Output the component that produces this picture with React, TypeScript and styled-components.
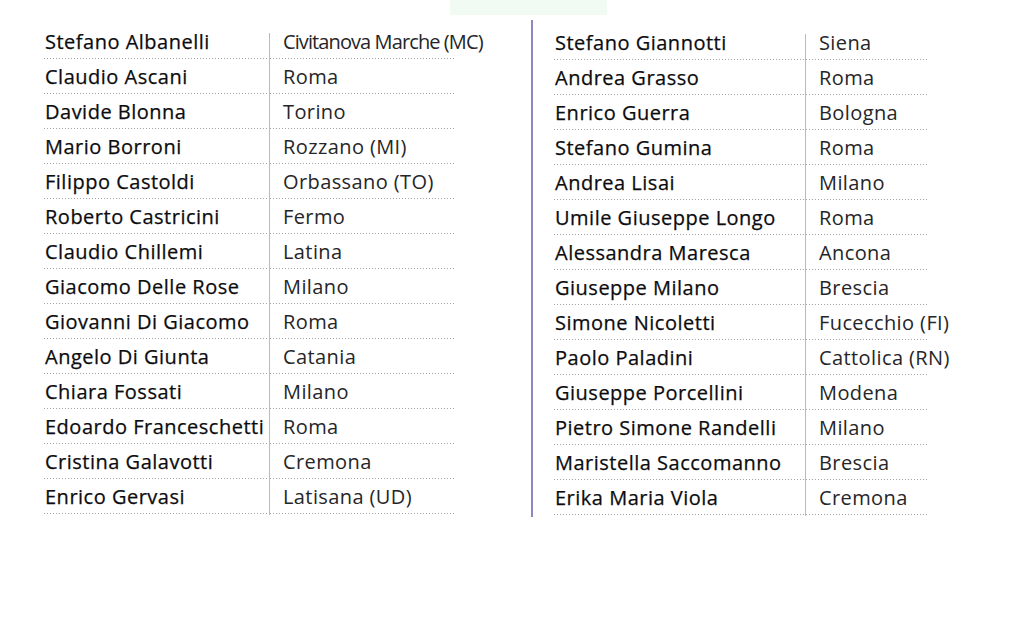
import React from "react";
import styled, { createGlobalStyle } from "styled-components";

const GlobalStyle = createGlobalStyle`
  *, *::before, *::after {
    box-sizing: border-box;
  }

  body {
    margin: 0;
    background: #ffffff;
    font-family: "Open Sans", "Lato", sans-serif;
    color: #1d1d1f;
  }
`;

type Entry = [string, string];

const leftList: Entry[] = [
  ["Stefano Albanelli", "Civitanova Marche (MC)"],
  ["Claudio Ascani", "Roma"],
  ["Davide Blonna", "Torino"],
  ["Mario Borroni", "Rozzano (MI)"],
  ["Filippo Castoldi", "Orbassano (TO)"],
  ["Roberto Castricini", "Fermo"],
  ["Claudio Chillemi", "Latina"],
  ["Giacomo Delle Rose", "Milano"],
  ["Giovanni Di Giacomo", "Roma"],
  ["Angelo Di Giunta", "Catania"],
  ["Chiara Fossati", "Milano"],
  ["Edoardo Franceschetti", "Roma"],
  ["Cristina Galavotti", "Cremona"],
  ["Enrico Gervasi", "Latisana (UD)"],
];

const rightList: Entry[] = [
  ["Stefano Giannotti", "Siena"],
  ["Andrea Grasso", "Roma"],
  ["Enrico Guerra", "Bologna"],
  ["Stefano Gumina", "Roma"],
  ["Andrea Lisai", "Milano"],
  ["Umile Giuseppe Longo", "Roma"],
  ["Alessandra Maresca", "Ancona"],
  ["Giuseppe Milano", "Brescia"],
  ["Simone Nicoletti", "Fucecchio (FI)"],
  ["Paolo Paladini", "Cattolica (RN)"],
  ["Giuseppe Porcellini", "Modena"],
  ["Pietro Simone Randelli", "Milano"],
  ["Maristella Saccomanno", "Brescia"],
  ["Erika Maria Viola", "Cremona"],
];

const Page = styled.div`
  width: 1024px;
  height: 617px;
  overflow: hidden;
`;

const TopTab = styled.div`
  width: 157px;
  height: 15px;
  margin-left: 450px;
  background: #f2faf4;
`;

const Columns = styled.div`
  display: flex;
  align-items: flex-start;
  padding-left: 44px;
`;

const Table = styled.div<{ $nameWidth: number; $cityWidth: number; $top: number }>`
  position: relative;
  display: grid;
  grid-template-columns: ${(p) => p.$nameWidth}px ${(p) => p.$cityWidth}px;
  margin-top: ${(p) => p.$top}px;

  &::before {
    content: "";
    position: absolute;
    left: ${(p) => p.$nameWidth - 1}px;
    top: 9px;
    bottom: -1px;
    width: 1px;
    background: #b9b8cd;
  }
`;

const Row = styled.div`
  display: contents;
`;

const Cell = styled.div`
  height: 35px;
  display: flex;
  align-items: center;
  font-size: 20px;
  white-space: nowrap;
  background-image: linear-gradient(to right, #a3a3a3 1px, transparent 1px);
  background-size: 3px 1px;
  background-repeat: repeat-x;
  background-position: 0 100%;
`;

const Name = styled(Cell)`
  padding-left: 1px;
  font-weight: 500;
  letter-spacing: 0.5px;
  color: #0c0c0e;
  -webkit-text-stroke: 0.25px #0c0c0e;
`;

const City = styled(Cell)<{ $tight?: boolean }>`
  padding-left: 13px;
  font-weight: 400;
  color: #262628;
  letter-spacing: ${(p) => (p.$tight ? "-0.9px" : "0.4px")};
`;

const RightSection = styled.div`
  margin-left: 77px;
  margin-top: 5px;
  padding: 5px 0 2px 21px;
  border-left: 2px solid #8c89bf;
`;

const NameTable = ({
  list,
  nameWidth,
  cityWidth,
  top,
}: {
  list: Entry[];
  nameWidth: number;
  cityWidth: number;
  top: number;
}) => (
  <Table $nameWidth={nameWidth} $cityWidth={cityWidth} $top={top}>
    {list.map(([name, city]) => (
      <Row key={name}>
        <Name>{name}</Name>
        <City $tight={city.length > 18}>{city}</City>
      </Row>
    ))}
  </Table>
);

const App: React.FC = () => {
  return (
    <>
      <GlobalStyle />
      <Page>
        <TopTab />
        <Columns>
          <NameTable list={leftList} nameWidth={226} cityWidth={184} top={9} />
          <RightSection>
            <NameTable list={rightList} nameWidth={252} cityWidth={121} top={0} />
          </RightSection>
        </Columns>
      </Page>
    </>
  );
};

export default App;
